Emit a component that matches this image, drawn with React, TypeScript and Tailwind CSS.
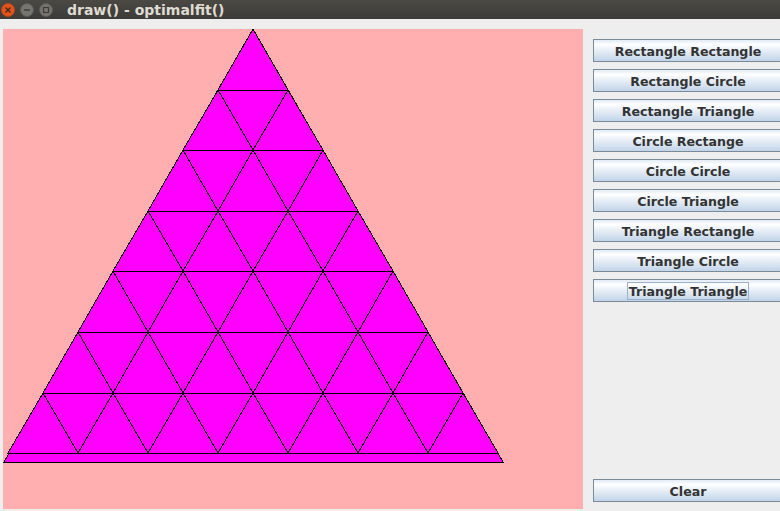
import React from 'react'

const labels = [
  'Rectangle Rectangle',
  'Rectangle Circle',
  'Rectangle Triangle',
  'Circle Rectange',
  'Circle Circle',
  'Circle Triangle',
  'Triangle Rectangle',
  'Triangle Circle',
  'Triangle Triangle',
]

// panel-local coordinates (panel starts at x=3, y=29)
const APEX_X = 250
const SIDE = 70
const ROW_H = 60.62

function Triangles() {
  const polys: string[] = []
  for (let k = 1; k <= 7; k++) {
    const top = Math.round(ROW_H * (k - 1))
    const bottom = Math.round(ROW_H * k)
    for (let j = 0; j < k; j++) {
      const ax = APEX_X - (SIDE / 2) * (k - 1) + SIDE * j
      polys.push(`${ax},${top} ${ax - SIDE / 2},${bottom} ${ax + SIDE / 2},${bottom}`)
    }
  }
  return (
    <svg width="580" height="480" className="block" shapeRendering="crispEdges">
      <polygon points="1,433 250,0 500,433" fill="#ff00ff" stroke="#000" strokeWidth="1" />
      {polys.map((p, i) => (
        <polygon key={i} points={p} fill="#ff00ff" stroke="#000" strokeWidth="1" />
      ))}
    </svg>
  )
}

function WinButton({ kind }: { kind: 'close' | 'min' | 'max' }) {
  const close = kind === 'close'
  return (
    <div
      className={`w-[14px] h-[14px] rounded-full flex items-center justify-center border ${
        close ? 'bg-[#e6541c] border-[#b8431a]' : 'bg-[#77756f] border-[#5a5954]'
      }`}
    >
      <svg width="8" height="8" viewBox="0 0 8 8">
        {kind === 'close' && (
          <path d="M1.5 1.5 L6.5 6.5 M6.5 1.5 L1.5 6.5" stroke="#3a2a22" strokeWidth="1.4" />
        )}
        {kind === 'min' && <path d="M1 4 L7 4" stroke="#3c3b37" strokeWidth="1.4" />}
        {kind === 'max' && <rect x="1.5" y="1.5" width="5" height="5" fill="none" stroke="#3c3b37" strokeWidth="1.2" />}
      </svg>
    </div>
  )
}

function JButton({ label, focused }: { label: string; focused?: boolean }) {
  return (
    <div className="w-[190px] h-[23px] shrink-0 border border-[#7a8a99] bg-[linear-gradient(to_bottom,#e2ebf5_0%,#ffffff_22%,#f2f6fb_35%,#c2d4e8_100%)] flex items-center justify-center">
      <span
        className={`text-[12.6px] font-bold text-[#333333] leading-[15px] pt-[1px] px-[1px] ${
          focused ? 'outline outline-1 outline-[#9cb1cc]' : ''
        }`}
        style={{ fontFamily: '"DejaVu Sans", sans-serif' }}
      >
        {label}
      </span>
    </div>
  )
}

export default function App() {
  return (
    <div className="w-[780px] h-[511px] overflow-hidden bg-[#eeeeee] flex flex-col">
      {/* title bar */}
      <div className="h-[19px] shrink-0 bg-[linear-gradient(to_bottom,#4a4944,#3c3b37)] flex items-center pl-[1px]">
        <div className="flex items-center gap-[5px]">
          <WinButton kind="close" />
          <WinButton kind="min" />
          <WinButton kind="max" />
        </div>
        <span
          className="ml-[14px] text-[14px] font-bold text-[#dfdbd2] leading-none"
          style={{ fontFamily: '"DejaVu Sans", sans-serif' }}
        >
          draw() - optimalfit()
        </span>
      </div>

      <div className="flex flex-1 pt-[10px] pl-[3px] gap-[10px] pb-[2px]">
        <div className="w-[580px] h-[480px] bg-[#ffafaf] shrink-0">
          <Triangles />
        </div>
        <div className="flex flex-col gap-[7px] pt-[10px] pb-[7px]">
          {labels.map((l) => (
            <JButton key={l} label={l} focused={l === 'Triangle Triangle'} />
          ))}
          <div className="mt-auto">
            <JButton label="Clear" />
          </div>
        </div>
      </div>
    </div>
  )
}
